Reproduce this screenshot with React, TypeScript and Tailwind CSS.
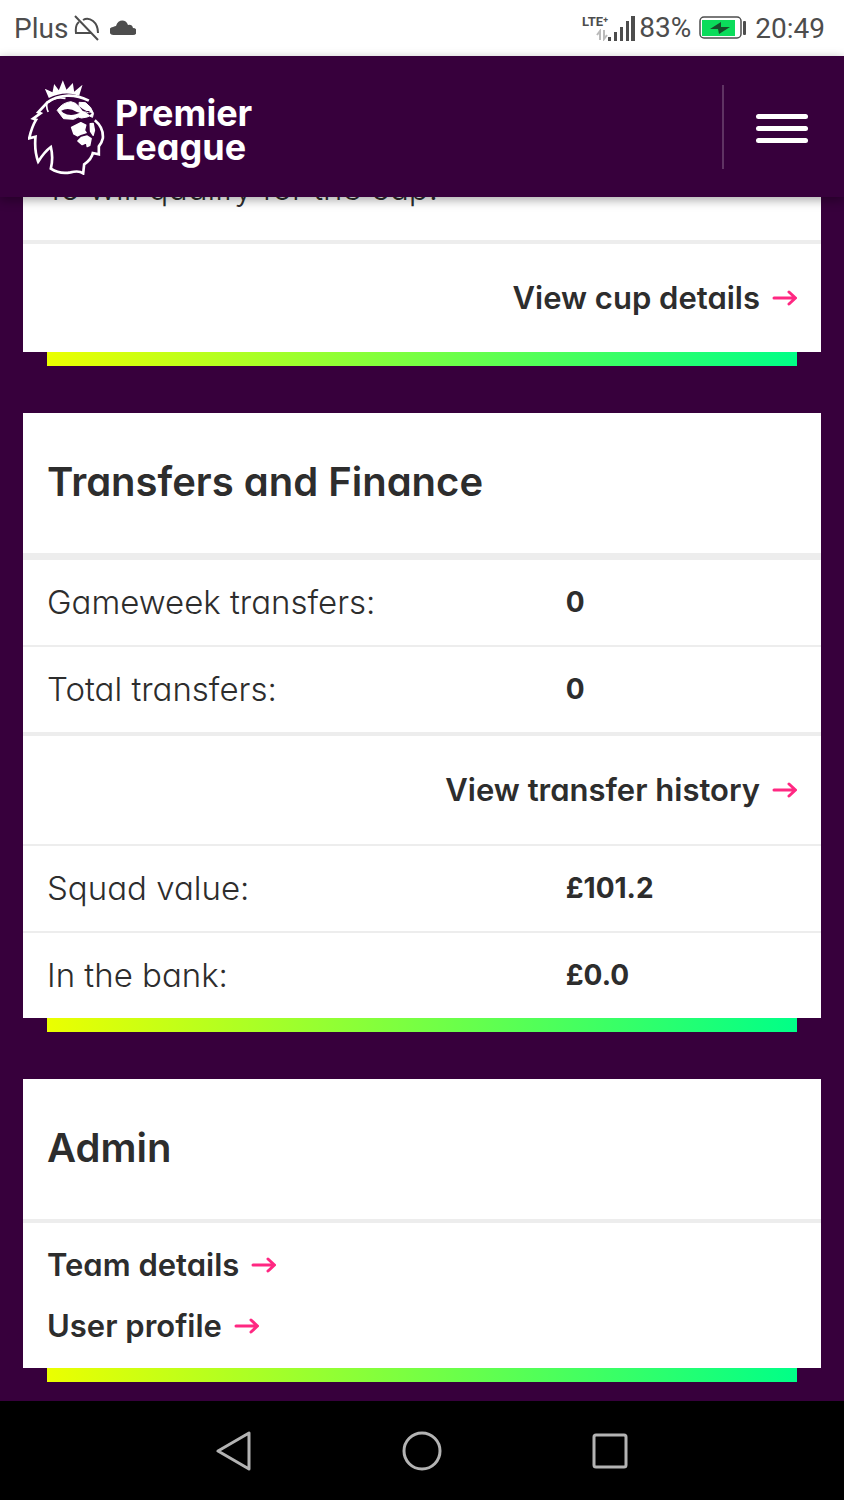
import type { ReactNode } from 'react';

const Arrow = () => (
  <svg width="25" height="18" viewBox="0 0 25 18" fill="none" stroke="#ff2882" strokeWidth="3" strokeLinecap="round" strokeLinejoin="round" aria-hidden="true">
    <path d="M2 9H23M17 3L23.5 9L17 15" />
  </svg>
);

const ArrowLink = ({ children }: { children: ReactNode }) => (
  <a href="#" className="inline-flex items-center gap-3 text-[31px] leading-9 font-semibold">
    {children}
    <Arrow />
  </a>
);

const Card = ({ children }: { children: ReactNode }) => (
  <section>
    <div className="bg-white">{children}</div>
    <div className="mx-6 h-3.5 bg-linear-to-r/srgb from-[#ebff00] to-[#00ff87]" />
  </section>
);

const Title = ({ children }: { children: ReactNode }) => (
  <h2 className="px-6 pt-[43px] pb-[45px] text-[40px] leading-[52px] font-semibold">{children}</h2>
);

const Row = ({ label, value }: { label: string; value: string }) => (
  <div className="flex items-center py-6">
    <dt className="w-[65%] pl-6 text-[33px] leading-[37px] font-light">{label}</dt>
    <dd className="pl-6 text-[28px] leading-[37px] font-bold">{value}</dd>
  </div>
);

const Lion = () => (
  <svg width="77" height="96" viewBox="54 36 230 288" fill="none" aria-hidden="true">
    <path fill="#fff" d="M116 93L104 65L127 76L132 51L146 70L158 40L169 68L188 48L192 74L217 53L207 86Q161 70 116 93Z" />
    <path stroke="#fff" strokeWidth="8" strokeLinejoin="miter" d="M236 101C190 78 143 83 112 106L84 136L91 139L69 155L78 158Q65 179 57 214L76 209Q72 252 84 284Q104 253 122 240Q130 272 122 305Q148 322 181 316Q207 310 219 319L222 292Q245 276 248 258L266 262L266 238Q276 225 278 214C280 190 271 174 254 160" />
    <path stroke="#fff" strokeWidth="5" d="M112 104Q106 117 114 135M116 105Q136 88 166 94" />
    <path fill="#fff" stroke="#fff" strokeWidth="3" strokeLinejoin="round" d="M141 130Q156 107 182 104L196 109L207 119L207 106L226 107L241 121L250 139L247 151L238 147L231 150L214 153L204 150L190 157L160 155Z" />
    <path fill="#37003c" d="M153 131Q176 120 200 135L209 137L197 142Q176 148 159 137ZM207 118L217 131L234 139L239 132L229 132L218 126ZM222 133L245 138L239 145Z" />
    <path fill="#fff" stroke="#fff" strokeWidth="4" strokeLinejoin="round" d="M184 181L212 167L227 174L223 190L228 197L214 201L202 207L191 201ZM240 170L249 169L253 190L249 205L241 193ZM203 222L214 211L231 207L243 215L239 235L231 239L229 227L216 233Z" />
  </svg>
);

const StatusBar = () => (
  <div className="flex h-14 items-center justify-between bg-white pr-[19px] pl-3.5 font-[Roboto,sans-serif] text-[#4d4d4d]">
    <div className="flex items-center gap-1.5 text-[28px] leading-8">
      <span className="pt-0.5">Plus</span>
      <svg width="26" height="26" viewBox="0 0 26 26" fill="none" stroke="currentColor" strokeWidth="2" aria-hidden="true">
        <path d="M5 7Q1 10 2 18H17M9 5Q14 2 19 6T24 18M1 1L24 25" />
      </svg>
      <svg className="ml-1" width="26" height="16" viewBox="0 0 26 16" fill="currentColor" aria-hidden="true">
        <path d="M4 15A4 4 0 0 1 3 7Q5 6 6 6C8-1 16-1 18 5Q22 4 23 8A3.5 3.5 0 0 1 23 15Z" />
      </svg>
    </div>
    <div className="flex items-center text-[28px] leading-8">
      <div className="flex flex-col items-end">
        <span className="text-[13px] leading-3.5 font-bold">LTE⁺</span>
        <svg width="12" height="12" viewBox="0 0 12 12" fill="none" stroke="#bbb" strokeWidth="2" aria-hidden="true">
          <path d="M4 11V2L1 6M8 1V10L11 6" />
        </svg>
      </div>
      <svg width="27" height="28" viewBox="0 0 27 28" fill="currentColor" aria-hidden="true">
        <path d="M0 23h3v4H0zM6 18h3v9H6zM12 13h3v14h-3zM18 7h3v20h-3zM23 2h4v25h-4z" />
      </svg>
      <span className="ml-1">83%</span>
      <svg className="ml-2" width="48" height="24" viewBox="0 0 48 24" aria-hidden="true">
        <rect x="1" y="1" width="41" height="21" rx="4" fill="#fff" stroke="#4d4d4d" strokeWidth="1.5" />
        <rect x="3" y="4" width="33" height="16" fill="#0bdc5b" />
        <path d="M11 13L22 6L22 11L31 11L20 18L19 13Z" fill="#174d2b" />
        <rect x="44" y="5" width="3" height="14" rx="1" fill="#4d4d4d" />
      </svg>
      <span className="ml-2 pt-0.5">20:49</span>
    </div>
  </div>
);

export default function App() {
  return (
    <div className="flex min-h-screen flex-col bg-[#37003c] font-[Inter,sans-serif] text-[#2d2d2d] [font-feature-settings:'cv11']">
      <div className="relative z-10">
        <StatusBar />
        <header className="flex h-[141px] items-center justify-between bg-[#37003c] px-7 shadow-[0_3px_10px_rgba(0,0,0,0.35)]">
          <a href="#" className="flex items-center gap-2.5 text-white">
            <Lion />
            <span className="flex flex-col pt-1.5 text-[36px] leading-[34px] font-bold">
              <span>Premier</span>
              <span>League</span>
            </span>
          </a>
          <div className="flex h-[84px] items-center border-l-2 border-[#5f3363] pr-2 pl-8">
            <button type="button" aria-label="Menu" className="flex flex-col gap-[7px] pt-1">
              <span className="h-[5px] w-[52px] rounded-full bg-white" />
              <span className="h-[5px] w-[52px] rounded-full bg-white" />
              <span className="h-[5px] w-[52px] rounded-full bg-white" />
            </button>
          </div>
        </header>
      </div>

      <main className="-mt-7 flex grow flex-col gap-[47px] px-[23px]">
        <Card>
          <p className="px-6 pb-8 text-[33px] leading-[39px] font-light">16 will qualify for the cup.</p>
          <div className="border-t-4 border-[#ededed] px-6 py-9 text-right">
            <ArrowLink>View cup details</ArrowLink>
          </div>
        </Card>

        <Card>
          <Title>Transfers and Finance</Title>
          <dl className="divide-y-2 divide-[#ededed] border-t-[7px] border-[#ededed]">
            <Row label="Gameweek transfers:" value="0" />
            <Row label="Total transfers:" value="0" />
          </dl>
          <div className="border-y-4 border-b-2 border-[#ededed] px-6 py-9 text-right">
            <ArrowLink>View transfer history</ArrowLink>
          </div>
          <dl className="divide-y-2 divide-[#ededed]">
            <Row label="Squad value:" value="£101.2" />
            <Row label="In the bank:" value="£0.0" />
          </dl>
        </Card>

        <Card>
          <Title>Admin</Title>
          <ul className="flex flex-col gap-[25px] border-t-4 border-[#ededed] px-6 py-6">
            <li className="flex"><ArrowLink>Team details</ArrowLink></li>
            <li className="flex"><ArrowLink>User profile</ArrowLink></li>
          </ul>
        </Card>
      </main>

      <nav aria-label="System" className="flex h-[99px] items-center justify-center gap-[148px] bg-black">
        <button type="button" aria-label="Back">
          <svg width="40" height="40" viewBox="0 0 40 40" fill="none" stroke="#b3b3b3" strokeWidth="3" strokeLinejoin="round"><path d="M4 20L35 2V38Z" /></svg>
        </button>
        <button type="button" aria-label="Home">
          <svg width="40" height="40" viewBox="0 0 40 40" fill="none" stroke="#b3b3b3" strokeWidth="3"><circle cx="20" cy="20" r="18" /></svg>
        </button>
        <button type="button" aria-label="Recent apps">
          <svg width="40" height="40" viewBox="0 0 40 40" fill="none" stroke="#b3b3b3" strokeWidth="3"><rect x="4" y="4" width="32" height="32" rx="2" /></svg>
        </button>
      </nav>
    </div>
  );
}
